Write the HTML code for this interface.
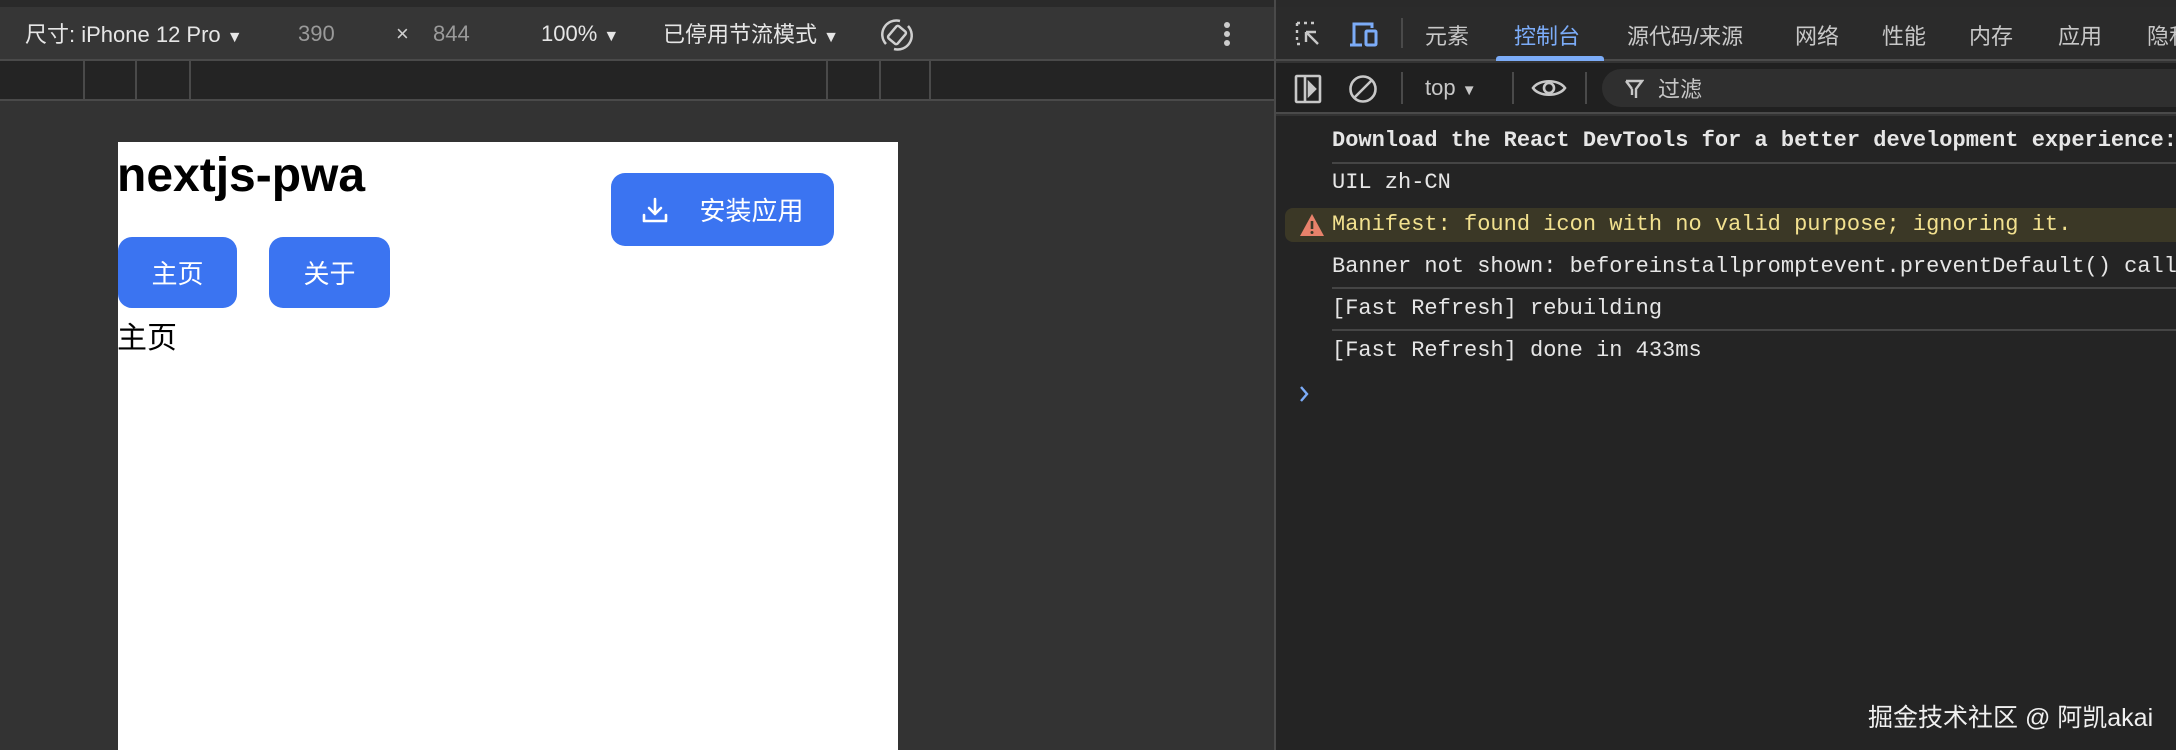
<!DOCTYPE html>
<html><head><meta charset="utf-8"><style>
*{margin:0;padding:0;box-sizing:border-box}
body{width:2176px;height:750px;overflow:hidden;background:#333;font-family:"Liberation Sans","Noto Sans CJK SC",sans-serif;position:relative;color:#e3e3e3}
.a{position:absolute;white-space:nowrap}
.mono{font-family:"Liberation Mono","DejaVu Sans Mono","Noto Sans CJK SC",monospace;font-size:22px}
.btn{position:absolute;background:#3b74f1;border-radius:14px;color:#fff;font-size:26px;display:flex;align-items:center;justify-content:center}
#con{position:absolute;left:1276px;top:116px;width:900px;height:634px;background:#242424;overflow:hidden}
#con .a{}
</style></head><body>
<div class="a" style="left:0;top:0;width:1275px;height:7px;background:#2a2a2a"></div>
<div class="a" style="left:0;top:7px;width:1275px;height:54px;background:#363636;border-bottom:2px solid #4a4a4a"></div>
<div class="a" style="left:25px;top:17px;font-size:22px;color:#e6e6e6">尺寸: iPhone 12 Pro <span style="font-size:16px">▼</span></div>
<div class="a" style="left:298px;top:21px;font-size:22px;color:#9a9a9a">390</div>
<div class="a" style="left:396px;top:21px;font-size:22px;color:#d0d0d0">×</div>
<div class="a" style="left:433px;top:21px;font-size:22px;color:#9a9a9a">844</div>
<div class="a" style="left:541px;top:21px;font-size:22px;color:#e6e6e6">100% <span style="font-size:16px">▼</span></div>
<div class="a" style="left:663px;top:17px;font-size:22px;color:#e6e6e6">已停用节流模式 <span style="font-size:16px">▼</span></div>
<svg class="a" style="left:878px;top:16px" width="38" height="38" viewBox="0 0 38 38" fill="none" stroke="#cfcfcf" stroke-width="2.5"><path d="M8 28 A14 14 0 0 1 22 5"/><path d="M30 10 A14 14 0 0 1 16 33"/><rect x="13" y="11" width="12" height="16" rx="2" transform="rotate(40 19 19)"/></svg>
<div class="a" style="left:1224px;top:22px;width:6px;height:6px;border-radius:3px;background:#ccc;box-shadow:0 9px 0 #ccc,0 18px 0 #ccc"></div>
<div class="a" style="left:0;top:61px;width:1275px;height:40px;background:#242424;border-bottom:2px solid #4a4a4a"></div>
<div class="a" style="left:83px;top:61px;width:2px;height:39px;background:#4a4a4a"></div>
<div class="a" style="left:135px;top:61px;width:2px;height:39px;background:#4a4a4a"></div>
<div class="a" style="left:189px;top:61px;width:2px;height:39px;background:#4a4a4a"></div>
<div class="a" style="left:826px;top:61px;width:2px;height:39px;background:#4a4a4a"></div>
<div class="a" style="left:879px;top:61px;width:2px;height:39px;background:#4a4a4a"></div>
<div class="a" style="left:929px;top:61px;width:2px;height:39px;background:#4a4a4a"></div>
<div class="a" style="left:118px;top:142px;width:780px;height:608px;background:#fff"></div>
<div class="a" style="left:117px;top:148px;font-size:48px;font-weight:bold;color:#000">nextjs-pwa</div>
<div class="btn" style="left:611px;top:173px;width:223px;height:73px">
<svg width="28" height="28" viewBox="0 0 28 28" fill="none" stroke="#fff" stroke-width="2.6" stroke-linecap="round" stroke-linejoin="round" style="margin-right:30px"><path d="M14 3v15M8 12l6 6 6-6M3 19v6h22v-6"/></svg>安装应用</div>
<div class="btn" style="left:118px;top:237px;width:119px;height:71px">主页</div>
<div class="btn" style="left:269px;top:237px;width:121px;height:71px">关于</div>
<div class="a" style="left:117px;top:313px;font-size:30px;color:#000">主页</div>
<div class="a" style="left:1274px;top:0;width:2px;height:750px;background:#4a4a4a"></div>
<div class="a" style="left:1276px;top:0;width:900px;height:7px;background:#2a2a2a"></div>
<div class="a" style="left:1276px;top:7px;width:900px;height:54px;background:#2b2b2b;border-bottom:2px solid #4a4a4a"></div>
<svg class="a" style="left:1294px;top:20px" width="28" height="28" viewBox="0 0 28 28" fill="none" stroke="#c8c8c8" stroke-width="2.4"><path d="M3 3h3M10 3h3M17 3h3M3 3v3M3 10v3M3 17v3M3 24h3" /><path d="M12 12l12 12M12 12v10M12 12h10"/></svg>
<svg class="a" style="left:1348px;top:20px" width="34" height="28" viewBox="0 0 34 28" fill="none" stroke="#7cacf8" stroke-width="3"><path d="M6 24V4h18v4"/><path d="M2 25h12"/><rect x="18" y="11" width="10" height="14" rx="1"/></svg>
<div class="a" style="left:1401px;top:18px;width:2px;height:30px;background:#4a4a4a"></div>
<div class="a" style="left:1425px;top:19px;font-size:22px;color:#c8c8c8">元素</div>
<div class="a" style="left:1514px;top:19px;font-size:22px;color:#7cacf8">控制台</div>
<div class="a" style="left:1496px;top:56px;width:108px;height:5px;border-radius:3px 3px 0 0;background:#7cacf8"></div>
<div class="a" style="left:1627px;top:19px;font-size:22px;color:#c8c8c8">源代码/来源</div>
<div class="a" style="left:1795px;top:19px;font-size:22px;color:#c8c8c8">网络</div>
<div class="a" style="left:1882px;top:19px;font-size:22px;color:#c8c8c8">性能</div>
<div class="a" style="left:1969px;top:19px;font-size:22px;color:#c8c8c8">内存</div>
<div class="a" style="left:2058px;top:19px;font-size:22px;color:#c8c8c8">应用</div>
<div class="a" style="left:2147px;top:19px;font-size:22px;color:#c8c8c8;width:29px;overflow:hidden">隐私</div>
<div class="a" style="left:1276px;top:63px;width:900px;height:51px;background:#202020;border-bottom:2px solid #4a4a4a"></div>
<svg class="a" style="left:1294px;top:74px" width="28" height="30" viewBox="0 0 28 30" fill="none" stroke="#c8c8c8" stroke-width="2.6"><rect x="2" y="2" width="24" height="26" rx="1"/><path d="M11 2v26"/><path d="M15 9l6 6-6 6z" fill="#c8c8c8"/></svg>
<svg class="a" style="left:1348px;top:74px" width="30" height="30" viewBox="0 0 30 30" fill="none" stroke="#c8c8c8" stroke-width="2.6"><circle cx="15" cy="15" r="12.5"/><path d="M6 24L24 6"/></svg>
<div class="a" style="left:1401px;top:72px;width:2px;height:32px;background:#4a4a4a"></div>
<div class="a" style="left:1425px;top:75px;font-size:22px;color:#c8c8c8">top <span style="font-size:15px">▼</span></div>
<div class="a" style="left:1512px;top:72px;width:2px;height:32px;background:#4a4a4a"></div>
<svg class="a" style="left:1531px;top:76px" width="36" height="24" viewBox="0 0 36 24" fill="none" stroke="#c8c8c8" stroke-width="2.6"><path d="M2 12C8 3 28 3 34 12C28 21 8 21 2 12z"/><circle cx="18" cy="12" r="5"/></svg>
<div class="a" style="left:1585px;top:72px;width:2px;height:32px;background:#4a4a4a"></div>
<div class="a" style="left:1602px;top:69px;width:574px;height:38px;border-radius:19px 0 0 19px;background:#2f2f2f"></div>
<svg class="a" style="left:1624px;top:78px" width="20" height="22" viewBox="0 0 20 22" fill="none" stroke="#c8c8c8" stroke-width="2.4"><path d="M2 3h16l-6 8v9M8 11v6"/><path d="M2 3l6 8"/></svg>
<div class="a" style="left:1658px;top:72px;font-size:22px;color:#c8c8c8">过滤</div>
<div id="con">
<div class="a mono" style="left:56px;top:12px;font-weight:bold;color:#e6e6e6">Download the React DevTools for a better development experience: https://reactjs.org</div>
<div class="a" style="left:56px;top:46px;width:844px;height:2px;background:#454545"></div>
<div class="a mono" style="left:56px;top:54px;color:#e6e6e6">UIL zh-CN</div>
<div class="a" style="left:9px;top:92px;width:900px;height:34px;border-radius:8px;background:#3b3826"></div>
<svg class="a" style="left:23px;top:97px" width="26" height="24" viewBox="0 0 26 24"><path d="M13 1L25 23H1z" fill="#e8826b"/><path d="M13 8v8" stroke="#3b3826" stroke-width="2.6"/><circle cx="13" cy="19.5" r="1.5" fill="#3b3826"/></svg>
<div class="a mono" style="left:56px;top:96px;color:#f2e18f">Manifest: found icon with no valid purpose; ignoring it.</div>
<div class="a mono" style="left:56px;top:138px;color:#e6e6e6">Banner not shown: beforeinstallpromptevent.preventDefault() called.</div>
<div class="a" style="left:56px;top:171px;width:844px;height:2px;background:#454545"></div>
<div class="a mono" style="left:56px;top:180px;color:#e6e6e6">[Fast Refresh] rebuilding</div>
<div class="a" style="left:56px;top:213px;width:844px;height:2px;background:#454545"></div>
<div class="a mono" style="left:56px;top:222px;color:#e6e6e6">[Fast Refresh] done in 433ms</div>
<svg class="a" style="left:22px;top:268px" width="12" height="20" viewBox="0 0 12 20" fill="none" stroke="#7cacf8" stroke-width="2.4"><path d="M3 3l6 7-6 7"/></svg>
</div>
<div class="a" style="left:1868px;top:698px;font-size:25px;color:#f0f0f0">掘金技术社区 @ 阿凯akai</div>
</body></html>
